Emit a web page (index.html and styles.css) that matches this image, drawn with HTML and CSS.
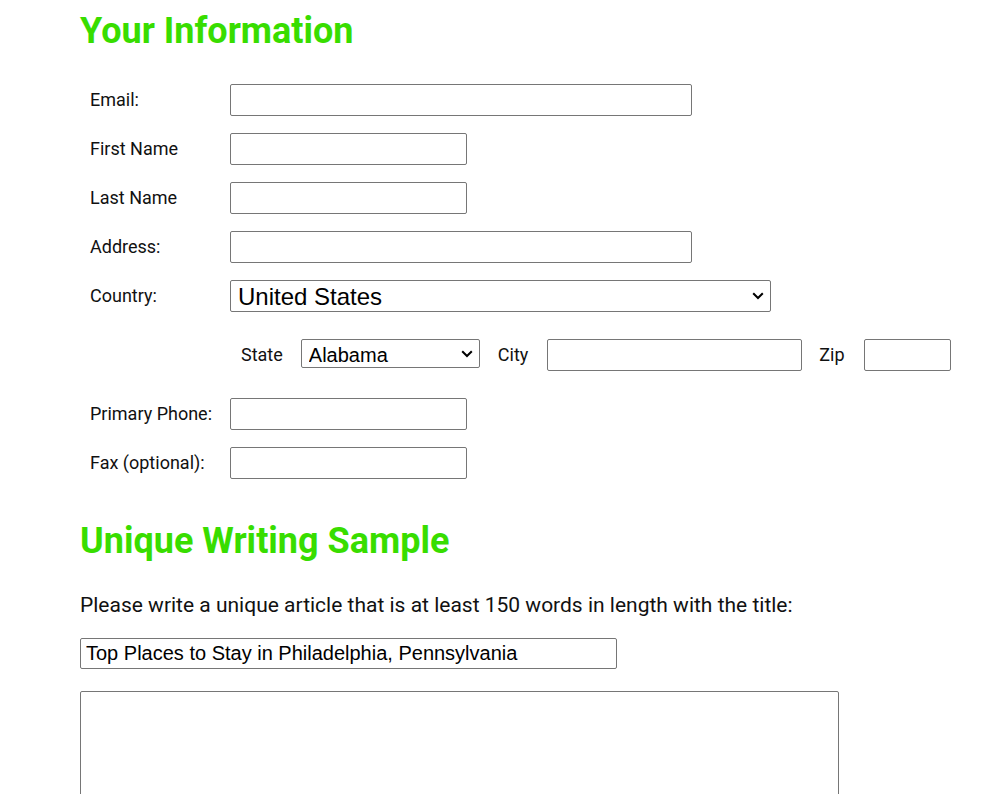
FILE: index.html
```html
<!DOCTYPE html>
<html lang="en">
<head>
<meta charset="utf-8">
<title>Application</title>
<link rel="stylesheet" href="styles.css">
</head>
<body>
<div class="page">
  <h1 class="section-title">Your Information</h1>
  <div class="info-form">
    <div class="row"><label class="label">Email:</label><input class="field w-long" type="text"></div>
    <div class="row"><label class="label">First Name</label><input class="field w-short" type="text"></div>
    <div class="row"><label class="label">Last Name</label><input class="field w-short" type="text"></div>
    <div class="row"><label class="label">Address:</label><input class="field w-long" type="text"></div>
    <div class="row"><label class="label">Country:</label>
      <select class="dropdown country"><option>United States</option></select>
    </div>
    <div class="row location">
      <span class="label"></span>
      <div class="loc-items">
        <label class="sub-label state-label">State</label>
        <select class="dropdown state"><option>Alabama</option></select>
        <label class="sub-label city-label">City</label>
        <input class="field city" type="text">
        <label class="sub-label zip-label">Zip</label>
        <input class="field zip" type="text">
      </div>
    </div>
    <div class="row after-loc"><label class="label">Primary Phone:</label><input class="field w-short" type="text"></div>
    <div class="row"><label class="label">Fax (optional):</label><input class="field w-short" type="text"></div>
  </div>

  <h1 class="section-title second">Unique Writing Sample</h1>
  <p class="prompt">Please write a unique article that is at least 150 words in length with the title:</p>
  <input class="title-field" type="text" value="Top Places to Stay in Philadelphia, Pennsylvania" readonly>
  <textarea class="article"></textarea>
</div>
</body>
</html>
```

FILE: styles.css
```css
html, body {
  margin: 0;
  padding: 0;
  background: #ffffff;
}

body {
  font-family: Roboto, "Liberation Sans", Arial, sans-serif;
  color: #111111;
}

.page {
  padding: 10px 0 0 80px;
}

.section-title {
  margin: 0;
  font-family: Roboto, sans-serif;
  font-weight: 700;
  font-size: 36px;
  line-height: 42px;
  color: #38dd00;
}

.section-title.second {
  margin-top: 41px;
}

.info-form {
  margin-top: 32px;
  padding-left: 10px;
  display: flex;
  flex-direction: column;
  gap: 17px;
}

.row {
  display: flex;
  align-items: center;
}

.label {
  width: 140px;
  flex: none;
  font-size: 18px;
  line-height: 21px;
  margin-top: -2px;
  color: #111111;
}

.field {
  box-sizing: border-box;
  height: 32px;
  border: 1px solid #767676;
  border-radius: 2px;
  background: #fff;
  padding: 1px 4px;
  font-family: "Liberation Sans", Arial, sans-serif;
  font-size: 20px;
  margin: 0;
}

.w-long { width: 462px; }
.w-short { width: 237px; }

.dropdown {
  -webkit-appearance: none;
  appearance: none;
  box-sizing: border-box;
  border: 1px solid #767676;
  border-radius: 2px;
  background-color: #fff;
  background-image: url("data:image/svg+xml;utf8,<svg xmlns='http://www.w3.org/2000/svg' width='12' height='8' viewBox='0 0 12 8'><path d='M1.2 1.2 L6 6 L10.8 1.2' fill='none' stroke='black' stroke-width='2'/></svg>");
  background-repeat: no-repeat;
  background-size: 12px 8px;
  color: #000;
  font-family: "Liberation Sans", Arial, sans-serif;
  margin: 0;
  padding: 0 24px 0 7px;
}

.country {
  width: 541px;
  height: 32px;
  font-size: 24px;
  background-position: right 6px center;
}

.location {
  margin-top: 10px;
}

.after-loc {
  margin-top: 10px;
}

.loc-items {
  display: flex;
  align-items: center;
  padding-left: 11px;
}

.sub-label {
  font-size: 18px;
  line-height: 21px;
  margin-top: -2px;
  color: #111111;
}

.state-label { margin-right: 18px; }
.city-label { margin-left: 18px; margin-right: 19px; }
.zip-label { margin-left: 17px; margin-right: 19px; }

.state {
  align-self: flex-start;
  width: 179px;
  height: 29px;
  font-size: 20px;
  padding-top: 2px;
  background-position: right 6px center;
}

.city { width: 255px; }
.zip { width: 87px; }

.prompt {
  margin: 31px 0 0 0;
  font-size: 21px;
  line-height: 24px;
  color: #111111;
}

.title-field {
  display: block;
  box-sizing: border-box;
  margin-top: 21px;
  width: 537px;
  height: 31px;
  border: 1px solid #767676;
  border-radius: 2px;
  padding: 1px 5px;
  font-family: "Liberation Sans", Arial, sans-serif;
  font-size: 20px;
  color: #000;
}

.article {
  display: block;
  box-sizing: border-box;
  margin-top: 22px;
  width: 759px;
  height: 300px;
  border: 1px solid #767676;
  border-radius: 2px;
  resize: none;
}
```
